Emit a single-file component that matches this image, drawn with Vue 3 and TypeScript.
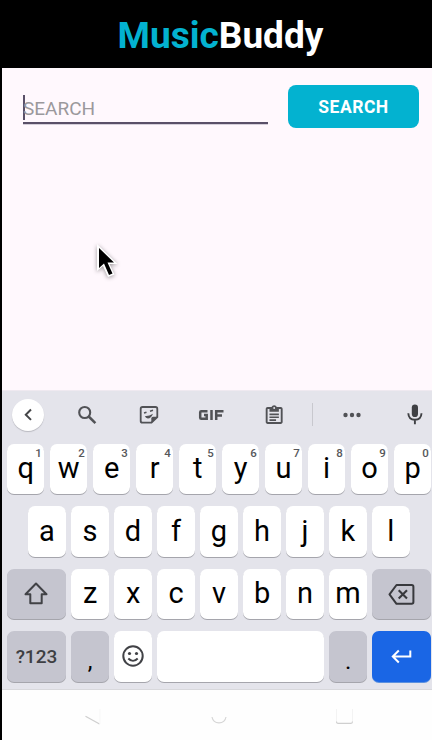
<script setup lang="ts">
import { ref } from 'vue'

interface Key {
  label: string
  hint?: string
}

const query = ref('')

const topRow: Key[] = [...'qwertyuiop'].map((label, i) => ({
  label,
  hint: String((i + 1) % 10),
}))
const homeRow: Key[] = [...'asdfghjkl'].map((label) => ({ label }))
const bottomRow: Key[] = [...'zxcvbnm'].map((label) => ({ label }))

function press(key: Key) {
  query.value += key.label
}
function erase() {
  query.value = query.value.slice(0, -1)
}
</script>

<template>
  <div class="screen">
    <header class="header">
      <h1 class="title"><span class="accent">Music</span>Buddy</h1>
    </header>

    <main class="content">
      <form class="search" @submit.prevent>
        <div class="field">
          <span v-if="query">{{ query }}</span>
          <span class="caret"></span>
          <span v-if="!query" class="placeholder">SEARCH</span>
        </div>
        <button class="submit" type="submit">SEARCH</button>
      </form>
      <svg class="pointer" width="28" height="40" viewBox="0 0 28 40">
        <path d="M5 3V30L11 25L16 36L22.500 33.500L17.500 23H25.500Z" fill="#fff" />
        <path d="M7 7V27L12 22.500L17 34L20.500 32.500L15.500 21.500H22Z" fill="#000" />
      </svg>
    </main>

    <section class="keyboard">
      <div class="toolbar">
        <div class="tool">
          <span class="back">
            <svg width="32" height="32" viewBox="0 0 32 32"><path d="M19 10.500L13.800 15.700L19 20.900" fill="none" stroke="#444548" stroke-width="2" /></svg>
          </span>
        </div>
        <div class="tool">
          <svg width="24" height="24" viewBox="0 0 24 24" fill="none" stroke="#515256">
            <circle cx="9.700" cy="9.500" r="5.500" stroke-width="2.100" /><path d="M13.700 13.500L20.400 20.200" stroke-width="2.500" />
          </svg>
        </div>
        <div class="tool">
          <svg width="24" height="24" viewBox="0 0 24 24" fill="none" stroke="#515256" stroke-width="1.800">
            <path d="M5.500 4H18.500Q20.300 4 20.300 5.800V14L14.500 19.700H5.500Q3.700 19.700 3.700 18V5.800Q3.700 4 5.500 4Z" />
            <path d="M14.300 20V15.500Q14.300 13.700 16 13.700H20.500Z" fill="#515256" stroke="none" />
            <path d="M7 10L9.500 9.200M13 8.200L16 7.300" stroke-width="1.500" />
            <path d="M7.800 13.300Q12.800 13.200 16 10.800Q14 15.600 10.800 15.500Q8.800 15.300 7.800 13.300Z" fill="#515256" stroke="none" />
          </svg>
        </div>
        <div class="tool">
          <svg width="26" height="12" viewBox="0 0 26 12" fill="none" stroke="#515256" stroke-width="2.500">
            <path d="M9.500 2.200H3.200Q2.200 2.200 2.200 3.200V8.800Q2.200 9.800 3.200 9.800H8.700V5.900H6M13.500 1V11M18.200 11V2.200H25.500M18.200 6.600H24" />
          </svg>
        </div>
        <div class="tool">
          <svg width="24" height="24" viewBox="0 0 24 24" fill="#515256">
            <path d="M19 3h-4.180C14.400 1.840 13.300 1 12 1s-2.400.840-2.820 2H5c-1.100 0-2 .9-2 2v14c0 1.100.9 2 2 2h14c1.100 0 2-.9 2-2V5c0-1.100-.9-2-2-2zm-7 0a1 1 0 1 1 0 2 1 1 0 0 1 0-2zm7 16H5V5h2v3h10V5h2v14zM7 10h10v1.800H7zM7 13h10v1.800H7zM7 16h7v1.800H7z" transform="translate(.900 1.200) scale(.94)" />
          </svg>
        </div>
        <span class="divider"></span>
        <div class="tool">
          <svg width="20" height="6" viewBox="0 0 20 6" fill="#515256"><circle cx="3.500" cy="3" r="2.200" /><circle cx="10" cy="3" r="2.200" /><circle cx="16.500" cy="3" r="2.200" /></svg>
        </div>
        <div class="tool">
          <svg width="20" height="24" viewBox="0 0 20 24">
            <rect x="6.800" y="1.500" width="6.200" height="12.500" rx="3.100" fill="#3f4044" />
            <path d="M3.300 10.200Q3.600 16.700 9.900 16.700T16.500 10.200M9.900 16.500V21.200" fill="none" stroke="#3f4044" stroke-width="1.900" />
          </svg>
        </div>
      </div>

      <div class="row">
        <button v-for="key in topRow" :key="key.label" class="key" @click="press(key)">
          {{ key.label }}<span class="hint">{{ key.hint }}</span>
        </button>
      </div>
      <div class="row home">
        <button v-for="key in homeRow" :key="key.label" class="key" @click="press(key)">{{ key.label }}</button>
      </div>
      <div class="row">
        <button class="key wide muted glyph" aria-label="Shift">
          <svg width="26" height="26" viewBox="0 0 26 26"><path d="M13 2.500L2.500 13.200H7.300V22.200H18.700V13.200H23.500Z" fill="none" stroke="#414246" stroke-width="2" stroke-linejoin="round" /></svg>
        </button>
        <button v-for="key in bottomRow" :key="key.label" class="key" @click="press(key)">{{ key.label }}</button>
        <button class="key wide muted glyph" aria-label="Delete" @click="erase">
          <svg width="28" height="24" viewBox="0 0 28 24" fill="none" stroke="#38393d">
            <path d="M8.500 3H23.700Q25.400 3 25.400 4.700V20.100Q25.400 21.800 23.700 21.800H8.500L1.500 12.400Z" stroke-width="2" stroke-linejoin="round" />
            <path d="M10.700 8.200L19 16.500M19 8.200L10.700 16.500" stroke-width="2.100" />
          </svg>
        </button>
      </div>
      <div class="row">
        <button class="key wide muted symbols">?123</button>
        <button class="key muted mark">,</button>
        <button class="key glyph" aria-label="Emoji">
          <svg width="24" height="24" viewBox="0 0 24 24" fill="none" stroke="#414246">
            <circle cx="12" cy="12" r="9.700" stroke-width="2" />
            <path d="M7.300 14.500Q12 19.300 16.700 14.500" stroke-width="1.900" />
            <g fill="#414246" stroke="none"><circle cx="8.500" cy="9.500" r="1.600" /><circle cx="15.500" cy="9.500" r="1.600" /></g>
          </svg>
        </button>
        <button class="key space" aria-label="Space"></button>
        <button class="key muted mark">.</button>
        <button class="key wide enter glyph" aria-label="Enter">
          <svg width="22" height="16" viewBox="0 0 22 16"><path d="M19.300 2.500V8.500H2M7.800 2.500L1.800 8.500L7.800 14.500" fill="none" stroke="#fff" stroke-width="2" /></svg>
        </button>
      </div>
    </section>

    <nav class="system">
      <svg width="18" height="20" viewBox="0 0 18 20" fill="none"><path d="M1.500 9.300L15.500 17" stroke="#cfcfcf" stroke-width="1.300" /><path d="M16 17V2" stroke="#f7f7f7" /></svg>
      <svg width="18" height="20" viewBox="0 0 18 20" fill="none"><path d="M2 10C3.500 17.800 14.500 17.800 16 10" stroke="#d6d6d6" stroke-width="1.200" /></svg>
      <svg width="18" height="20" viewBox="0 0 18 20" fill="none"><path d="M.500 2V15M16.500 2V15" stroke="#f3f3f3" /><path d="M.500 14.500Q.500 16.300 2 16.300H15Q16.500 16.300 16.500 14.500" stroke="#cfcfcf" stroke-width="1.200" /></svg>
    </nav>
  </div>
</template>

<style>
body {
  background: #000;
}
</style>

<style scoped>
.screen {
  box-sizing: border-box;
  width: 432px;
  height: 740px;
  padding-left: 2px;
  display: flex;
  flex-direction: column;
  overflow: hidden;
  background: #000;
  font-family: Roboto, sans-serif;
}
.screen * {
  box-sizing: border-box;
}
.header {
  height: 68px;
  flex: none;
  display: flex;
  justify-content: center;
  padding: 14px 0 0 7px;
}
.title {
  margin: 0;
  font-size: 37px;
  line-height: 43px;
  font-weight: 700;
  color: #fff;
}
.accent {
  color: #03b2d0;
}
.content {
  position: relative;
  height: 322px;
  flex: none;
  padding: 17px 13px 0 21px;
  background: #fff8fd;
}
.search {
  display: flex;
  justify-content: space-between;
}
.field {
  width: 245px;
  height: 39px;
  padding-top: 10px;
  display: flex;
  border-bottom: 2px solid #5a5068;
  box-shadow: 0 1px 0 #d5cfda;
  font-size: 19px;
  line-height: 28px;
  color: #222;
}
.caret {
  width: 2px;
  height: 25px;
  margin-right: -2px;
  background: #5a5068;
}
.placeholder {
  color: #9b989c;
}
.submit {
  width: 131px;
  height: 43px;
  padding: 0;
  border: 0;
  border-radius: 8px;
  background: #03b2d0;
  color: #fff;
  font: 700 17.500px/43px Roboto, sans-serif;
  letter-spacing: 0.5px;
  padding-top: 1px;
}
.pointer {
  position: absolute;
  left: 90px;
  top: 173px;
  filter: drop-shadow(0 1px 2px rgba(0, 0, 0, 0.4));
}
.keyboard {
  height: 300px;
  flex: none;
  display: flex;
  flex-direction: column;
  gap: 12px;
  overflow: hidden;
  background: #e4e4eb;
  border-top: 1px solid #efe9f0;
  border-bottom: 1px solid #d8d8dc;
}
.toolbar {
  height: 47px;
  flex: none;
  margin-bottom: -6px;
  display: grid;
  grid-template-columns: 52px 66px 58px 66px 60px 17px 61px 66px;
  align-items: center;
  justify-items: center;
}
.tool {
  display: flex;
}
.back {
  width: 32px;
  height: 32px;
  display: flex;
  border-radius: 50%;
  background: #fff;
  box-shadow: 0 1px 1px #b9b9c0;
}
.divider {
  width: 1px;
  height: 23px;
  background: #c8c8ce;
}
.row {
  height: 50.400px;
  flex: none;
  display: flex;
  gap: 5.600px;
  padding: 0 0 0 5px;
}
.home {
  padding-left: 26.300px;
}
.key {
  position: relative;
  width: 37.400px;
  flex: none;
  padding: 0 0 2px;
  border: 0;
  border-radius: 7px;
  background: #fff;
  box-shadow: 0 1px 0 #a5a5ac;
  color: #000;
  font: 400 29px/46px Roboto, sans-serif;
  text-align: center;
}
.hint {
  position: absolute;
  top: 3px;
  right: 2.500px;
  color: #56575b;
  font-size: 11.500px;
  line-height: 13px;
  font-weight: 500;
}
.wide {
  width: 58.900px;
}
.muted {
  background: #c5c5cf;
}
.glyph {
  display: flex;
  align-items: center;
  justify-content: center;
  padding: 0;
}
.symbols {
  padding: 2px 0 0;
  color: #3e3f43;
  font-size: 19px;
  font-weight: 500;
}
.mark {
  padding: 9px 0 0;
  font-size: 24px;
  line-height: 42px;
}
.space {
  width: 166.400px;
}
.enter {
  background: #1a66e5;
  box-shadow: 0 1px 0 #5c91df;
}
.system {
  flex: 1;
  display: flex;
  gap: 108px;
  padding: 17px 0 0 82px;
  background: #fefefe;
}
</style>
